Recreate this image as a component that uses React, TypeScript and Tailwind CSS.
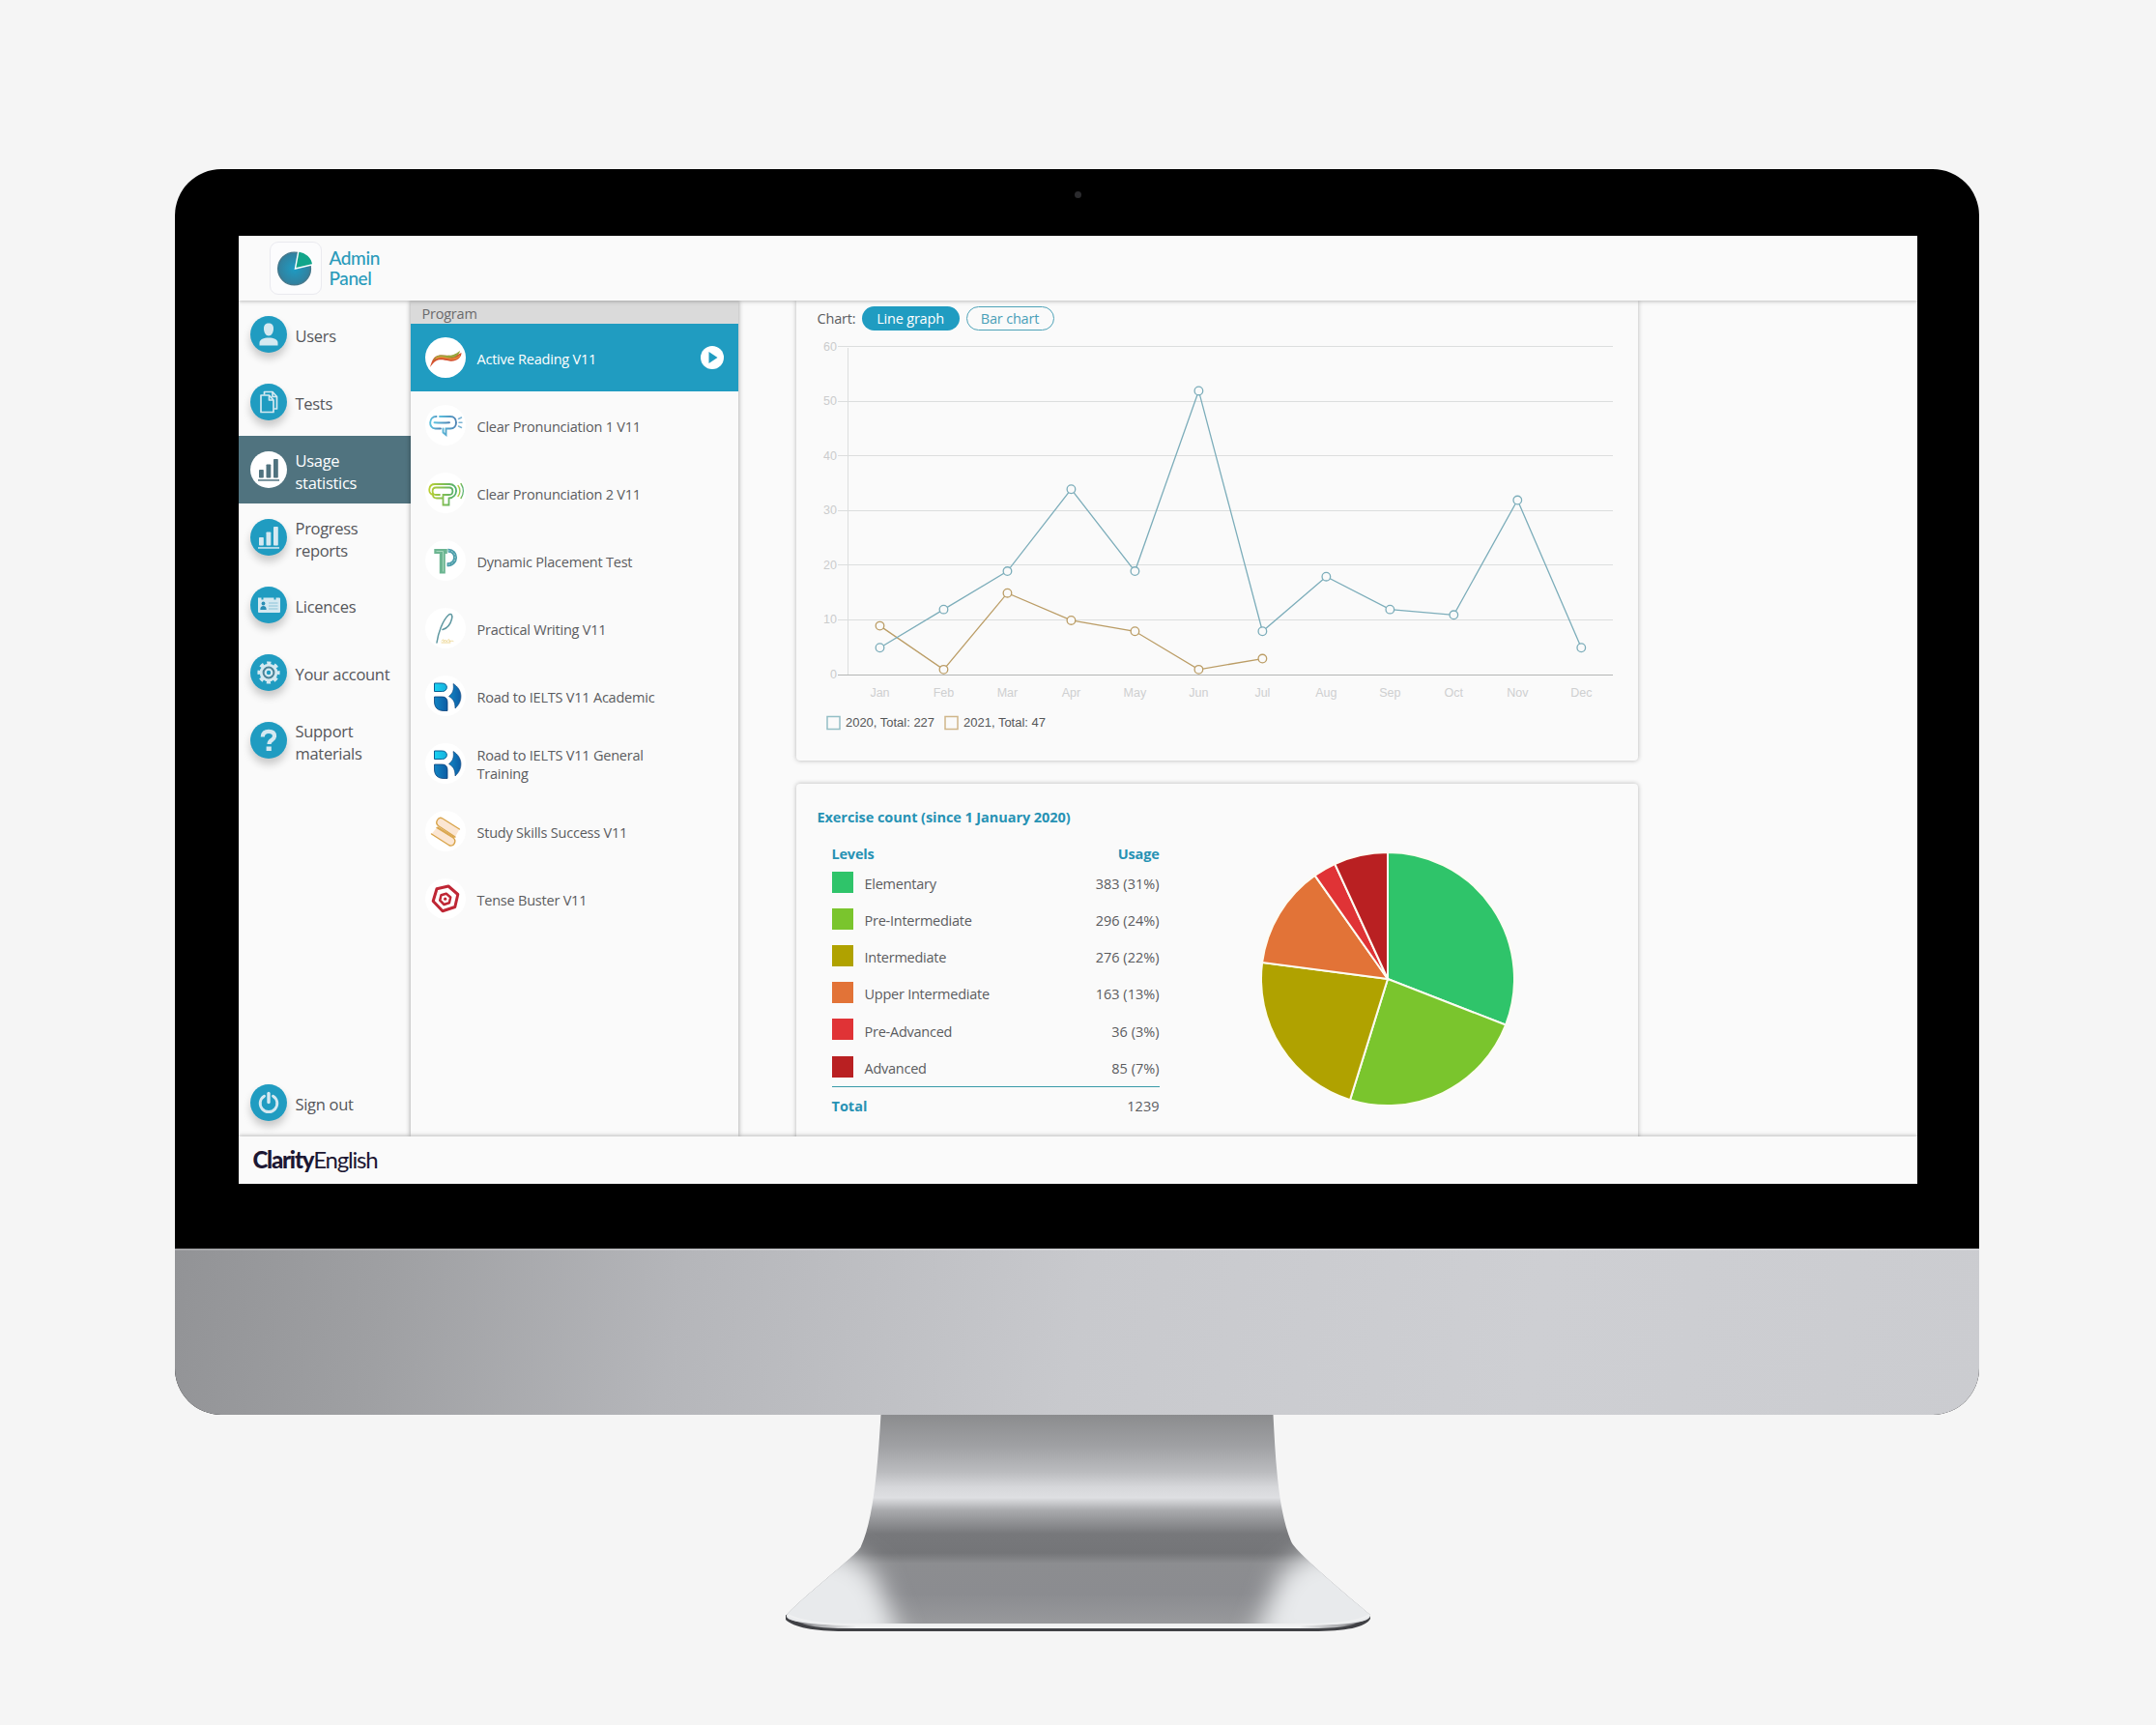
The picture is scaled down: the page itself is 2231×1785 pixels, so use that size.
import type { ReactNode } from 'react';

const UI = "font-['Open_Sans','Noto_Sans',sans-serif]";
const ARIAL = 'Liberation Sans, Arial, sans-serif';

type NavKey = 'users' | 'tests' | 'bars' | 'licences' | 'gear' | 'help' | 'power';

const navItems: { label: string[]; icon: NavKey; active?: boolean }[] = [
    { label: ['Users'], icon: 'users' },
    { label: ['Tests'], icon: 'tests' },
    { label: ['Usage', 'statistics'], icon: 'bars', active: true },
    { label: ['Progress', 'reports'], icon: 'bars' },
    { label: ['Licences'], icon: 'licences' },
    { label: ['Your account'], icon: 'gear' },
    { label: ['Support', 'materials'], icon: 'help' },
];

const NavGlyph = ({ name }: { name: NavKey }) => {
    switch (name) {
        case 'users':
            return (
                <g fill="currentColor">
                    <path d="M14 13c0-4 2-5.500 5-5.500s5 1.500 5 5.500c0 4-2 7.500-5 7.500s-5-3.500-5-7.500z" />
                    <path d="M9.500 30.500v-2.500c0-4 4.500-5.500 9.500-5.500s9.500 1.500 9.500 5.500v2.500z" />
                </g>
            );
        case 'tests':
            return (
                <g fill="none" stroke="currentColor" strokeWidth="1.700" strokeLinejoin="round">
                    <path d="M11 12h8.500l4.500 5v12.500H11z" />
                    <path d="M19.500 12v5H24" />
                    <path d="M14.500 11.500v-3h8.500l4.500 5v12.500h-3" />
                    <path d="M23 8.500v5h4.500" />
                </g>
            );
        case 'bars':
            return (
                <g fill="currentColor">
                    <rect x="9" y="19" width="4.800" height="8.500" rx="0.800" />
                    <rect x="16.500" y="13.500" width="4.800" height="14" rx="0.800" />
                    <rect x="24" y="8" width="4.800" height="19.500" rx="0.800" />
                    <rect x="8" y="29.200" width="22" height="1.500" />
                </g>
            );
        case 'licences':
            return (
                <g>
                    <path fill="currentColor" d="M8 11.500h3.500v2h2v-2h11v2h2v-2H30a1 1 0 0 1 1 1V26a1 1 0 0 1-1 1H9a1 1 0 0 1-1-1z" />
                    <circle cx="13.500" cy="17.500" r="1.900" fill="#2b8fb5" />
                    <path fill="#2b8fb5" d="M10.300 24c0-3 1.300-4 3.200-4s3.200 1 3.200 4z" />
                    <path stroke="#8cc3d8" strokeWidth="1" d="M19 17h9.500M19 20h9.500M19 23h9.500" />
                </g>
            );
        case 'gear':
            return (
                <g>
                    <circle cx="19" cy="19" r="9.300" fill="currentColor" />
                    <circle cx="19" cy="19" r="9.600" fill="none" stroke="currentColor" strokeWidth="4" strokeDasharray="4 3.540" strokeDashoffset="2" />
                    <circle cx="19" cy="19" r="5.400" fill="none" stroke="#4c8296" strokeWidth="2" />
                    <circle cx="19" cy="19" r="2.200" fill="#209cc1" />
                </g>
            );
        case 'help':
            return (
                <g>
                    <path d="M12.800 15.500c0-4 2.500-5.700 6.200-5.700s6 1.800 6 4.900c0 4.300-5.500 3.800-5.500 8.300" fill="none" stroke="currentColor" strokeWidth="4.200" />
                    <rect x="16.600" y="25.500" width="5.200" height="4.500" fill="currentColor" />
                </g>
            );
        default:
            return (
                <g fill="none" stroke="currentColor" strokeWidth="2.900" strokeLinecap="round">
                    <path d="M14.500 12.200a8.800 8.800 0 1 0 9 0" />
                    <path d="M19 9.500v9" strokeWidth="3.400" />
                </g>
            );
    }
};

const NavRow = ({ label, icon, active }: { label: string[]; icon: NavKey; active?: boolean }) => (
    <div className={`flex h-[70px] shrink-0 items-center gap-[9px] pl-3 ${active ? 'bg-[#50737f] text-white' : 'text-[#55565a]'}`}>
        <div
            className={`size-[38px] shrink-0 rounded-full ${
                active ? 'bg-white text-[#50737f]' : 'bg-[#209cc1] text-[#d5e9f1] shadow-[0_6px_9px_rgba(0,0,0,0.2)]'
            }`}
        >
            <svg viewBox="0 0 38 38" className="size-full">
                <NavGlyph name={icon} />
            </svg>
        </div>
        <div className="pt-[3px] text-[16.500px] leading-[23px] tracking-[-0.300px] whitespace-nowrap">
            {label.map((line) => (
                <div key={line}>{line}</div>
            ))}
        </div>
    </div>
);

const IeltsMark = () => (
    <g>
        <path d="M9.500 8h8c6.500 0 6.500 8.500 0 8.500h-8z" fill="url(#ieltsTop)" stroke="#0b5f93" strokeWidth="1" />
        <path d="M9.500 22h8c3.500 0 5.500 2 5.500 5.500v9h-4c-6 0-9.500-3.500-9.500-9.500z" fill="url(#ieltsDark)" stroke="#0a3f78" strokeWidth="0.800" />
        <path d="M29 8.500c10 6 10.500 18 2 25.500 0-6-1.500-9.500-6.500-12.500 4-3 5.500-7 4.500-13z" fill="url(#ieltsDark)" stroke="#0a3f78" strokeWidth="0.600" />
    </g>
);

const programs: { name: string[]; mark: ReactNode; active?: boolean }[] = [
    {
        name: ['Active Reading V11'],
        active: true,
        mark: (
            <g>
                <path d="M5 31c2-7 4-12 10-12.500 8-.5 14 2.500 22.500-2.500 0 6-6 9.500-12.500 8.500-9-1.500-13-3.500-20 6.500z" fill="#d4512d" />
                <path d="M8 24.500c2-4.500 5-6.500 9-6 7 .8 12 1 19-4.500-.5 4-5 8-12 7.500-6-.5-11-2-16 3z" fill="#98a53c" />
                <path d="M11 22c5-3 9-1 13 0s9 0 12-3" fill="none" stroke="#e8923a" strokeWidth="1.200" />
            </g>
        ),
    },
    {
        name: ['Clear Pronunciation 1 V11'],
        mark: (
            <g fill="none" stroke="url(#cpBlue)" strokeWidth="1.900" strokeLinecap="round">
                <path d="M16 24.500h-5.500c-7.500 0-7-12.500 1-12.500" />
                <path d="M15 12h11c8 0 8 12.500 0 12.500h-4.500v6.500l-3-2.500v-4" />
                <path d="M9.500 18.200c5 .3 10.500.3 15.500 0" />
                <path d="M34.500 14.500l3-1.500M35 18.200h3M34.500 22l3 1.500" stroke="#7cb3d4" strokeWidth="1.500" />
            </g>
        ),
    },
    {
        name: ['Clear Pronunciation 2 V11'],
        mark: (
            <g fill="none" stroke="url(#cpGreen)" strokeWidth="1.800" strokeLinecap="round">
                <path d="M18 26.500h-6c-3 0-4-1.500-4-3.500-5.500-1-5-11 2-11h15c9.500 0 9.500 13.500-.5 14.500v7h-6V23h6.500c4.500 0 4.500-7.500 0-7.500H11c-4.500 0-4.500 7.500 0 7.500h4" />
                <path d="M11 19.200h13.500" strokeWidth="1.600" strokeDasharray="0.200 3" />
                <path d="M34 13.500c2.500 3 2.500 8 0 11M37 11.500c3 4.500 3 10.500 0 15" strokeWidth="1.400" />
            </g>
        ),
    },
    {
        name: ['Dynamic Placement Test'],
        mark: (
            <g>
                <path d="M9.300 9h13.500v5h-2V34.500h-6V14H9.300z" fill="#6cb591" />
                <path d="M11.500 11.500h7v21" fill="none" stroke="#a5d6bb" strokeWidth="1" />
                <path d="M23.500 10.800c10-.5 10.500 14.500-1 14.500" fill="none" stroke="#4c9caa" strokeWidth="4" />
                <path d="M23.500 10.800c10-.5 10.500 14.500-1 14.500" fill="none" stroke="#9ed3d0" strokeWidth="1" strokeDasharray="2 1.500" />
            </g>
        ),
    },
    {
        name: ['Practical Writing V11'],
        mark: (
            <g fill="none" strokeLinecap="round">
                <path d="M12 36c1.500-10 6-23 12-28.500 3-2.500 4.500 0 3.500 4-1.500 6-5.500 10-9.500 11" stroke="#5f98a1" strokeWidth="1.500" />
                <path d="M17 34c2-2 3-1 2 1 2-2 3-2 3 0 2-3 4-3 3 0 2-1 3-1 4-.5M17 36h9" stroke="#ecd795" strokeWidth="1" />
            </g>
        ),
    },
    { name: ['Road to IELTS V11 Academic'], mark: <IeltsMark /> },
    { name: ['Road to IELTS V11 General', 'Training'], mark: <IeltsMark /> },
    {
        name: ['Study Skills Success V11'],
        mark: (
            <g fill="#fbe6d3" stroke="#d9a44a" strokeWidth="1.400" strokeLinecap="round">
                <path d="M35.500 19L18 8c-4.500-2.500-8.500 4-4.500 7.500L31 27" />
                <path d="M6.500 24L24.500 35.500c5 2.500 8.500-4.500 4.500-7.500L12 17.500" />
                <path d="M13 17l17 10.500" fill="none" />
            </g>
        ),
    },
    {
        name: ['Tense Buster V11'],
        mark: (
            <g fill="none" stroke="#bf2735" strokeLinejoin="round">
                <path d="M12 10.800L24 8l9.800 8.500-3 13L18 33.700 8.200 23.500z" strokeWidth="3" />
                <path d="M16.500 17.300l5.300-1.500 4.400 3.700-1.300 5.700-5.400 1.800-4.300-4.300z" strokeWidth="2.500" />
                <circle cx="20.700" cy="21.200" r="1.600" fill="#bf2735" stroke="none" />
            </g>
        ),
    },
];

const ProgramRow = ({ name, mark, active }: { name: string[]; mark: ReactNode; active?: boolean }) => (
    <div className={`flex h-[70px] shrink-0 items-center pl-[15px] pr-[15px] ${active ? 'bg-[#209cc1] text-white' : 'text-[#5b5c5f]'}`}>
        <svg viewBox="0 0 42 42" className="mr-3 size-[42px] shrink-0 rounded-full bg-white">
            {mark}
        </svg>
        <div className="flex-1 pt-[2px] text-[14.500px] leading-[19px] tracking-[-0.220px] whitespace-nowrap">
            {name.map((line) => (
                <div key={line}>{line}</div>
            ))}
        </div>
        {active && (
            <svg viewBox="0 0 24 24" className="size-6 shrink-0">
                <circle cx="12" cy="12" r="12" fill="#fff" />
                <path d="M8.500 6v12l9-6z" fill="#209cc1" />
            </svg>
        )}
    </div>
);

const months = ['Jan', 'Feb', 'Mar', 'Apr', 'May', 'Jun', 'Jul', 'Aug', 'Sep', 'Oct', 'Nov', 'Dec'];

const series = [
    { values: [9, 1, 15, 10, 8, 1, 3], color: '#bb9d66' },
    { values: [5, 12, 19, 34, 19, 52, 8, 18, 12, 11, 32, 5], color: '#7cadba' },
];

// Plot area: x of January, month pitch, y of the zero line, height of one unit
const px = (i: number) => 64.5 + i * 65.98;
const py = (v: number) => 353.5 - v * 5.655;

const LineChart = () => (
    <svg width="850" height="420" viewBox="0 0 850 420" className="shrink-0" fontFamily={ARIAL}>
        {[0, 10, 20, 30, 40, 50, 60].map((v) => (
            <g key={v}>
                <line x1="21" x2="823" y1={Math.round(py(v)) - 0.5} y2={Math.round(py(v)) - 0.5} stroke={v === 0 ? '#b4b6b5' : '#dcdede'} />
                <text x="20" y={py(v) + 3.5} textAnchor="end" fontSize="12.500" fill="#cbcccd">
                    {v}
                </text>
            </g>
        ))}
        <line x1="31.500" x2="31.500" y1="15" y2="353" stroke="#dcdede" />
        {months.map((m, i) => (
            <text key={m} x={px(i)} y="375.500" textAnchor="middle" fontSize="12.500" fill="#cecfd0">
                {m}
            </text>
        ))}
        {series.map((s) => (
            <g key={s.color} stroke={s.color} strokeWidth="1.300">
                <polyline points={s.values.map((v, i) => `${px(i)},${py(v)}`).join(' ')} fill="none" />
                {s.values.map((v, i) => (
                    <circle key={i} cx={px(i)} cy={py(v)} r="4.300" fill="#fafafa" />
                ))}
            </g>
        ))}
        <g fontSize="12.500" fill="#555658">
            <rect x="10" y="396.500" width="13" height="13" fill="none" stroke="#94bfc6" strokeWidth="1.500" />
            <text x="29" y="407" textLength="92" lengthAdjust="spacingAndGlyphs">
                2020, Total: 227
            </text>
            <rect x="132" y="396.500" width="13" height="13" fill="none" stroke="#d0b68a" strokeWidth="1.500" />
            <text x="151" y="407" textLength="85" lengthAdjust="spacingAndGlyphs">
                2021, Total: 47
            </text>
        </g>
    </svg>
);

const levels = [
    { name: 'Elementary', count: 383, pct: 31, color: '#2fc46a', swatch: 'bg-[#2fc46a]' },
    { name: 'Pre-Intermediate', count: 296, pct: 24, color: '#7ac52d', swatch: 'bg-[#7ac52d]' },
    { name: 'Intermediate', count: 276, pct: 22, color: '#b0a200', swatch: 'bg-[#b0a200]' },
    { name: 'Upper Intermediate', count: 163, pct: 13, color: '#e27337', swatch: 'bg-[#e27337]' },
    { name: 'Pre-Advanced', count: 36, pct: 3, color: '#e03336', swatch: 'bg-[#e03336]' },
    { name: 'Advanced', count: 85, pct: 7, color: '#b92022', swatch: 'bg-[#b92022]' },
];

const total = 1239;

const PieChart = () => {
    let sum = 0;
    const at = (n: number) => {
        const a = (n / total) * Math.PI * 2;
        return `${132 + 131 * Math.sin(a)} ${132 - 131 * Math.cos(a)}`;
    };
    return (
        <svg width="264" height="264" viewBox="0 0 264 264" className="shrink-0">
            {levels.map((l) => {
                const from = at(sum);
                sum += l.count;
                return <path key={l.name} d={`M132 132L${from}A131 131 0 0 1 ${at(sum)}Z`} fill={l.color} stroke="#fdfcf2" strokeWidth="2" />;
            })}
        </svg>
    );
};

const Header = () => (
    <header className="z-10 flex h-[67px] shrink-0 items-center gap-2 bg-[#fafafa] pb-px pl-8 shadow-[0_1px_4px_rgba(0,0,0,0.25)]">
        <div className="h-[55px] w-[54px] rounded-[9px] border border-[#eaeaef] bg-[#fcfcfd]">
            <svg viewBox="0 0 54 55" className="size-full">
                <circle cx="25.500" cy="28" r="17.500" fill="url(#logoBlue)" stroke="#45788c" strokeWidth="1.500" />
                <path d="M26.500 28L30 9c8 1 14.500 6.500 15.500 14.500z" fill="#12a58a" stroke="#fff" strokeWidth="1.500" />
            </svg>
        </div>
        <div className="font-['Lato','Open_Sans',sans-serif] text-[19px] leading-[21px] font-medium tracking-[-0.4px] text-[#2a9bbb]">
            <div>Admin</div>
            <div>Panel</div>
        </div>
    </header>
);

const Sidebar = () => (
    <nav className="flex w-[178px] shrink-0 flex-col">
        {navItems.map((item) => (
            <NavRow key={item.label[0]} {...item} />
        ))}
        <div className="flex-1" />
        <NavRow label={['Sign out']} icon="power" />
    </nav>
);

const Programs = () => (
    <aside className="relative flex w-[339px] shrink-0 flex-col bg-[#fafafa] shadow-[0_0_5px_rgba(0,0,0,0.4)]">
        <div className="flex h-6 shrink-0 items-center bg-[#dadada] pt-[3px] pl-3 text-[14.500px] tracking-[-0.220px] text-[#6a6a6c]">Program</div>
        {programs.map((p) => (
            <ProgramRow key={p.name.join(' ')} {...p} />
        ))}
    </aside>
);

const Usage = () => (
    <main className="flex flex-1 flex-col gap-6 overflow-hidden pl-[60px]">
        <section className="h-[476px] w-[871px] shrink-0 rounded-b-[4px] bg-[#fafafa] pl-[22px] shadow-[0_0_5px_rgba(0,0,0,0.28)]">
            <div className="flex h-[34px] items-end text-[14.500px] text-[#5b5c5f]">
                <span className="w-[46px] pb-[5px] leading-5 tracking-[-0.2px]">Chart:</span>
                <span className="mb-[3px] flex h-[25px] w-[101px] items-center justify-center rounded-full bg-[#209cc1] pt-px tracking-[-0.2px] text-white">
                    Line graph
                </span>
                <span className="mb-[3px] ml-[7px] flex h-[25px] w-[91px] items-center justify-center rounded-full border border-[#4fa3b8] pt-px tracking-[-0.2px] text-[#4a9fb8]">
                    Bar chart
                </span>
            </div>
            <LineChart />
        </section>
        <section className="flex h-[400px] w-[871px] shrink-0 rounded-t-[4px] bg-[#fafafa] pl-[22px] text-[14.500px] text-[#5b5c5f] shadow-[0_0_5px_rgba(0,0,0,0.28)]">
            <div className="w-[354px] pt-[25px]">
                <h2 className="leading-5 font-bold tracking-[-0.070px] whitespace-nowrap text-[#2792b4]">Exercise count (since 1 January 2020)</h2>
                <div className="mt-[18px] ml-[15px] flex justify-between leading-5 font-bold tracking-[-0.2px] text-[#2792b4]">
                    <span>Levels</span>
                    <span>Usage</span>
                </div>
                <ul className="ml-[15px] pt-px">
                    {levels.map((l) => (
                        <li key={l.name} className="flex h-[38.100px] items-center">
                            <span className={`mr-3 mb-[2px] size-[22px] ${l.swatch}`} />
                            <span className="flex-1 pt-[2px] tracking-[-0.250px]">{l.name}</span>
                            <span className="pt-[2px]">
                                {l.count} ({l.pct}%)
                            </span>
                        </li>
                    ))}
                </ul>
                <div className="ml-[15px] flex justify-between border-t border-[#3a9aa8] pt-[10px] leading-5">
                    <span className="font-bold text-[#2792b4]">Total</span>
                    <span>{total}</span>
                </div>
            </div>
            <div className="pt-[70px] pl-[104px]">
                <PieChart />
            </div>
        </section>
    </main>
);

const Footer = () => (
    <footer className="z-10 flex h-[49px] shrink-0 items-center bg-[#fafafa] pb-px pl-[15px] font-['Lato',sans-serif] text-[24px] tracking-[-1.220px] text-[#1c1733] shadow-[0_-1px_4px_rgba(0,0,0,0.25)]">
        <span className="font-black">Clarity</span>
        <span>English</span>
    </footer>
);

const Stand = () => (
    <svg width="610" height="232" viewBox="0 0 610 232" className="ml-1 shrink-0">
        <defs>
            <linearGradient id="neck" x1="0" y1="0" x2="0" y2="220" gradientUnits="userSpaceOnUse">
                <stop offset="0" stopColor="#8b8c8e" />
                <stop offset="0.150" stopColor="#a0a1a4" />
                <stop offset="0.270" stopColor="#bbbcbf" />
                <stop offset="0.340" stopColor="#d6d7da" />
                <stop offset="0.390" stopColor="#dedfe2" />
                <stop offset="0.450" stopColor="#a9aaad" />
                <stop offset="0.560" stopColor="#77787b" />
                <stop offset="0.650" stopColor="#747578" />
                <stop offset="0.700" stopColor="#8c8d90" />
                <stop offset="0.840" stopColor="#8b8c90" />
                <stop offset="1" stopColor="#999a9d" />
            </linearGradient>
            <linearGradient id="lip" x1="0" y1="0" x2="1" y2="0">
                <stop offset="0" stopColor="#3f4044" />
                <stop offset="0.050" stopColor="#a9aaad" />
                <stop offset="0.120" stopColor="#f1f2f3" />
                <stop offset="0.880" stopColor="#f1f2f3" />
                <stop offset="0.950" stopColor="#a9aaad" />
                <stop offset="1" stopColor="#3f4044" />
            </linearGradient>
            <filter id="soft" x="-30%" y="-30%" width="160%" height="160%">
                <feGaussianBlur stdDeviation="13" />
            </filter>
            <clipPath id="foot">
                <path d="M98.500 0H504.500C507 50 510 100 523 131C528 143 585 190 605 207Q606 215 570 217H40Q-2 215 1 207C20 186 77 143 78 136C90 110 95 60 98.500 0Z" />
            </clipPath>
        </defs>
        <path d="M0 207V212C8 220 30 224 60 224H545C580 224 600 220 605 211V207L560 212H45Z" fill="#404145" />
        <path d="M1 206C10 217 30 221 60 221H545C580 221 596 217 604 206L560 212H45Z" fill="url(#lip)" />
        <g clipPath="url(#foot)">
            <rect width="610" height="217" fill="url(#neck)" />
            <g filter="url(#soft)">
                <path d="M62 142L92 164L122 240H-60V142Z" fill="#e8eaec" />
                <path d="M542 142L512 164L482 240H670V142Z" fill="#e8eaec" />
            </g>
        </g>
        <path d="M2 207Q20 216 60 217H545Q590 216 604 207" fill="none" stroke="#eff0f1" strokeWidth="2" />
    </svg>
);

const App = () => (
    <div className={`flex h-[1785px] w-[2231px] flex-col items-center overflow-hidden bg-[#f5f5f5] pt-[175px] ${UI}`}>
        <svg width="0" height="0" className="absolute">
            <defs>
                <radialGradient id="logoBlue">
                    <stop offset="0" stopColor="#1d9cc4" />
                    <stop offset="1" stopColor="#337f9c" />
                </radialGradient>
                <linearGradient id="cpBlue">
                    <stop offset="0" stopColor="#5cc0de" />
                    <stop offset="1" stopColor="#4f83b4" />
                </linearGradient>
                <linearGradient id="cpGreen">
                    <stop offset="0" stopColor="#b9cf32" />
                    <stop offset="1" stopColor="#50ae70" />
                </linearGradient>
                <linearGradient id="ieltsTop">
                    <stop offset="0" stopColor="#19d3f2" />
                    <stop offset="1" stopColor="#16b0dd" />
                </linearGradient>
                <linearGradient id="ieltsDark">
                    <stop offset="0" stopColor="#1285c4" />
                    <stop offset="1" stopColor="#0c5ca3" />
                </linearGradient>
            </defs>
        </svg>
        <div className="mr-[3px] h-[1289px] w-[1867px] shrink-0 overflow-hidden rounded-[48px] bg-black">
            <div className="flex h-[69px] items-center justify-center pb-[17px] pl-[3px]">
                <span className="size-[7px] rounded-full bg-[#2b2b2e]" />
            </div>
            <div className="ml-[66px] flex h-[981px] w-[1737px] flex-col overflow-hidden bg-[#fafafa]">
                <Header />
                <div className="flex min-h-0 flex-1">
                    <Sidebar />
                    <Programs />
                    <Usage />
                </div>
                <Footer />
            </div>
            <div className="h-[67px]" />
            <div className="h-[172px] border-t-2 border-white/15 bg-[linear-gradient(100deg,#929396_0%,#9fa0a3_12%,#b5b6ba_28%,#c8c9cd_50%,#cecfd3_75%,#cbccd0_100%)]" />
        </div>
        <Stand />
    </div>
);

export default App;
